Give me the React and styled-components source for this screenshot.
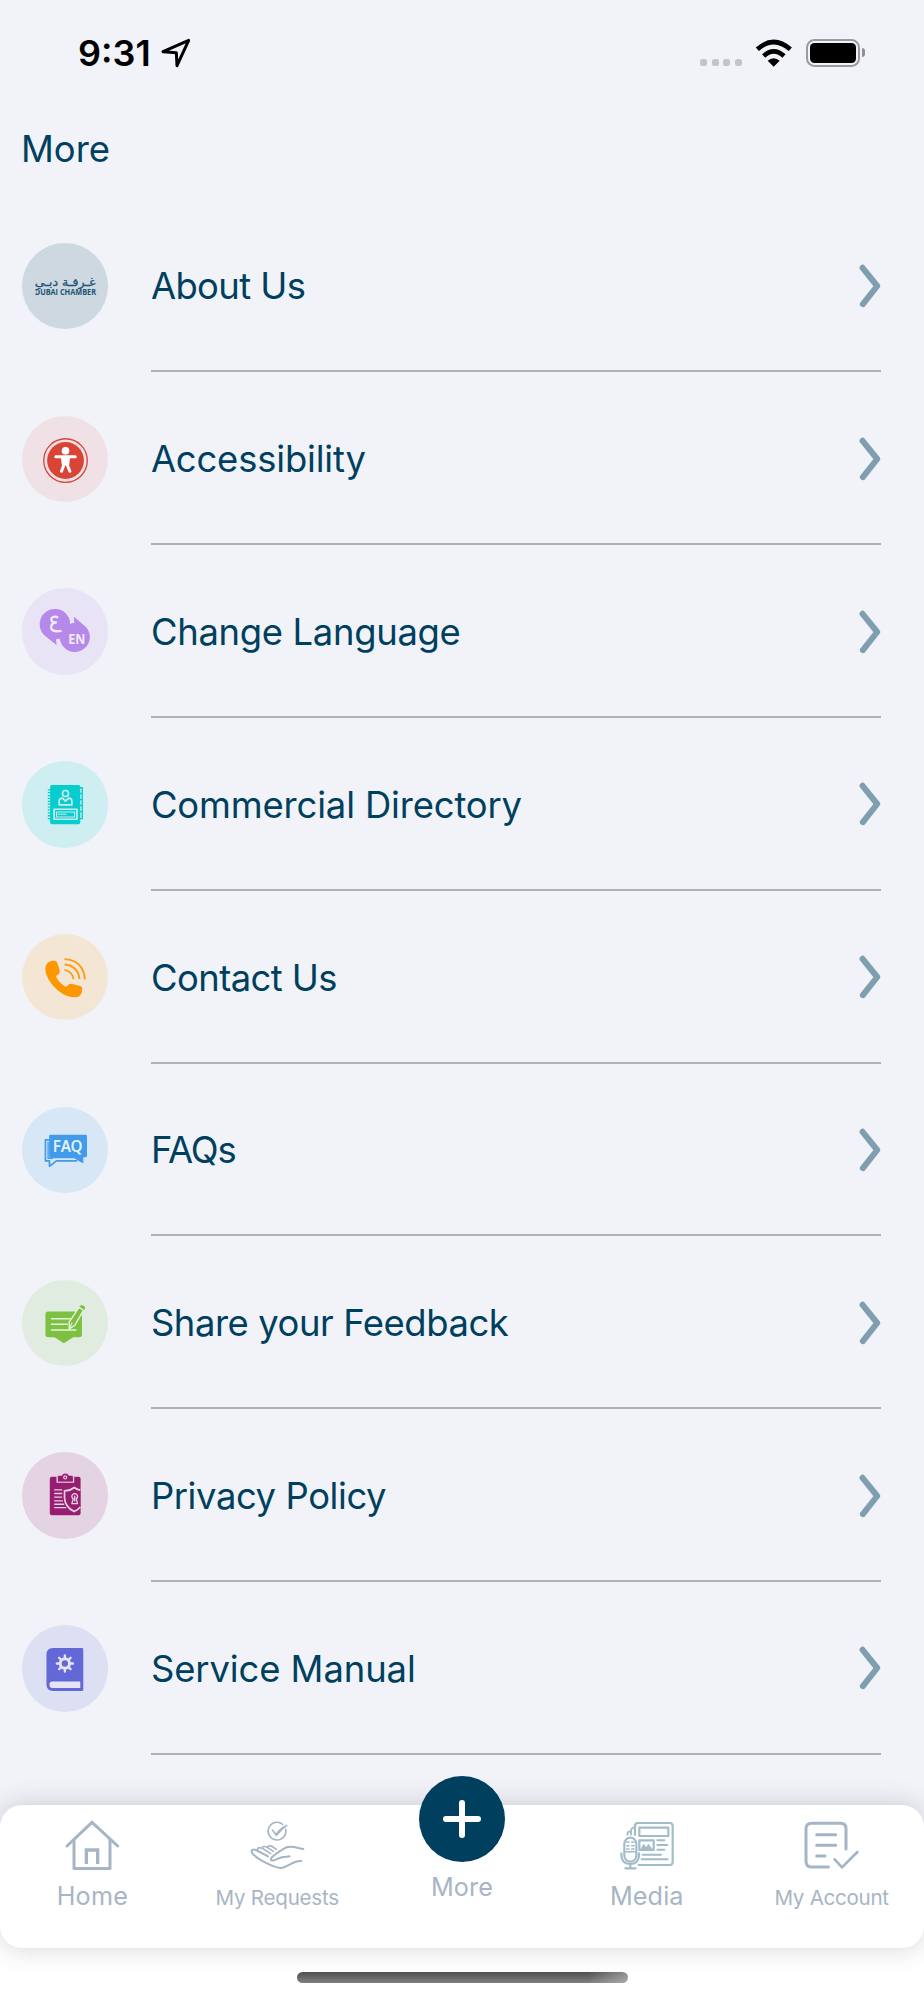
import React from 'react';
import styled, { createGlobalStyle } from 'styled-components';

const items = [
    {name: "About Us", icon: AboutIcon, color: "#ced8e1", track: -0.6},
    {name: "Accessibility", icon: AccessIcon, color: "#f0e1e6", track: -0.16},
    {name: "Change Language", icon: LanguageIcon, color: "#e8e3f5", track: -0.3},
    {name: "Commercial Directory", icon: DirectoryIcon, color: "#ceeef1", track: -0.14},
    {name: "Contact Us", icon: PhoneIcon, color: "#f3e6d5", track: -0.55},
    {name: "FAQs", icon: FaqIcon, color: "#d7e7f6", track: -1.1},
    {name: "Share your Feedback", icon: FeedbackIcon, color: "#e0ecdf", track: -0.42},
    {name: "Privacy Policy", icon: PrivacyIcon, color: "#e4d4e3", track: -0.4},
    {name: "Service Manual", icon: ManualIcon, color: "#dddff2", track: -0.08},
];

export default function App() {
  return (
    <Screen>
        <GlobalStyle />
        <StatusBar>
            <Clock>9:31</Clock>
            <LocationIcon />
            <StatusRight>
                <Dots><i /><i /><i /><i /></Dots>
                <WifiIcon />
                <Battery><div /></Battery>
                <BatteryTip />
            </StatusRight>
        </StatusBar>
        <Title>More</Title>
        <List>
            {items.map(({name, icon: Icon, color, track}) => (
                <Row key={name}>
                    <Badge $color={color}><Icon /></Badge>
                    <RowBody>
                        <Label $track={track}>{name}</Label>
                        <Chevron />
                    </RowBody>
                </Row>
            ))}
        </List>
        <Footer>
            <TabBar>
                <Tab><HomeIcon /><TabLabel $track={0.2}>Home</TabLabel></Tab>
                <Tab><RequestsIcon /><TabLabel $small $track={-0.25}>My Requests</TabLabel></Tab>
                <Tab>
                    <MoreButton><PlusIcon /></MoreButton>
                    <TabLabel $track={0.1} $raised>More</TabLabel>
                </Tab>
                <Tab><MediaIcon /><TabLabel $track={0.1}>Media</TabLabel></Tab>
                <Tab><AccountIcon /><TabLabel $small $track={-0.3}>My Account</TabLabel></Tab>
            </TabBar>
            <HomeIndicator />
        </Footer>
    </Screen>
  )
}

function LocationIcon() {
    return (
        <svg width="30" height="30" viewBox="482 114 90 90" fill="none" stroke="#000" strokeWidth="9" strokeLinejoin="round">
            <path d="M565 121 L488 155 L528 158 L530 197 Z" />
        </svg>
    );
}

function WifiIcon() {
    return (
        <svg width="38" height="30" viewBox="285 112 114 90" fill="none" stroke="#000" strokeWidth="14">
            <path d="M292 146 Q341 102 391 146" />
            <path d="M311 166 Q341 138 372 166" />
            <path d="M323 180 Q341 165 359 180 L341 198 Z" fill="#000" stroke="none" />
        </svg>
    );
}

function Chevron() {
    return (
        <svg width="24" height="46" viewBox="0 0 24 46" fill="none" stroke="#7f9fb1" strokeWidth="6" strokeLinecap="round" strokeLinejoin="round">
            <path d="M5.6 4.8 L20.2 23 L5.9 41.2" />
        </svg>
    );
}

function AboutIcon() {
    return (
        <svg viewBox="66 38 258 258" fill="#1d5373">
            <text x="104" y="166" fontSize="34" fontFamily="DejaVu Sans, sans-serif" textLength="182" lengthAdjust="spacingAndGlyphs" stroke="#1d5373" strokeWidth="0.8">غـرفـة دبـي</text>
            <text x="104" y="193" fontSize="23.5" fontFamily="Open Sans, sans-serif" fontWeight="700" textLength="183" lengthAdjust="spacingAndGlyphs">DUBAI CHAMBER</text>
            <rect x="103" y="180" width="6" height="9" fill="#ced8e1" />
        </svg>
    );
}

function AccessIcon() {
    return (
        <svg viewBox="66 555 258 258">
            <circle cx="196" cy="688" r="65" fill="none" stroke="#d94436" strokeWidth="4" />
            <circle cx="196" cy="688" r="55" fill="#d94436" />
            <circle cx="196" cy="659" r="11.5" fill="#fff" />
            <path d="M167 677 H225 M184 720 L193 696 H199 L209 720" fill="none" stroke="#fff" strokeWidth="9" strokeLinecap="round" strokeLinejoin="round" />
            <path d="M182 676 H210 L207 702 H185 Z" fill="#fff" />
        </svg>
    );
}

function LanguageIcon() {
    return (
        <svg viewBox="66 54 258 258">
            <path d="M165 117 A45 45 0 0 1 210 160 L222 155 L221 140 L258 171 A45 45 0 1 1 180 211 L177 206 L168 209 L169 224 L133 195 A45 45 0 0 1 165 117 Z" fill="#b588ea" />
            <path d="M209 158 L222 155 M178 207 L168 210" stroke="#e8e3f5" strokeWidth="5" />
            <path d="M174 143 C163 136 151 141 154 151 C156 156 161 157 170 157 C158 157 151 164 153 173 C156 185 172 184 184 182" fill="none" stroke="#f1eafa" strokeWidth="7" />
            <text x="204" y="221" fontSize="43" fontWeight="700" fontFamily="Noto Sans, sans-serif" textLength="51" lengthAdjust="spacingAndGlyphs" fill="#f1eafa">EN</text>
        </svg>
    );
}

function DirectoryIcon() {
    return (
        <svg viewBox="66 573 258 258" fill="none">
            <rect x="150" y="645" width="90" height="117" rx="5" fill="#08cdce" />
            <path d="M147 657 V752" stroke="#08cdce" strokeWidth="8" strokeDasharray="4 4.6" />
            <path d="M239 653 H246 V745 H239" stroke="#08cdce" strokeWidth="4" />
            <path d="M243 668 V740" stroke="#08cdce" strokeWidth="8" strokeDasharray="4 14" />
            <g stroke="#ceeef1" strokeWidth="5" strokeLinejoin="round">
                <circle cx="196" cy="670" r="9" />
                <path d="M177 704 V694 Q177 684 187 684 L196 693 L205 684 Q215 684 215 694 V704 Z" />
                <rect x="162" y="717" width="68" height="30" />
                <path d="M169 725 H223 V740 H169 Z M172 732 H199" strokeWidth="3" />
            </g>
        </svg>
    );
}

function PhoneIcon() {
    return (
        <svg viewBox="66 57 258 258" fill="none">
            <path d="M147 140 Q157 135 166 138 Q171 140 173 147 L179 169 Q180 175 173 178 Q168 181 168 185 Q177 204 195 214 Q200 215 204 209 Q209 204 216 206 L240 212 Q246 214 246 221 Q245 240 232 245 Q213 249 188 236 Q150 212 137 174 Q132 148 147 140 Z" fill="#fc9700" />
            <path d="M193 132 Q249 135 254 193 M193 148 Q233 151 238 192 M193 164 Q216 168 220 192" stroke="#fc9d14" strokeWidth="5.5" />
        </svg>
    );
}

function FaqIcon() {
    return (
        <svg viewBox="66 574 258 258" fill="none">
            <path d="M147 672 H136 V735 H148 V751 L169 735 H231" stroke="#409bea" strokeWidth="5" strokeLinejoin="round" />
            <path d="M144 678 V727 H158" stroke="#409bea" strokeWidth="4" />
            <path d="M151 657 H256 Q260 657 260 661 V720 Q260 724 256 724 H249 V743 L222 727 H156 Q147 727 147 719 V661 Q147 657 151 657 Z" fill="#409bea" />
            <text x="158" y="707" fontSize="46" fontWeight="600" fontFamily="Noto Sans, sans-serif" fill="#e4f0fb" textLength="89" lengthAdjust="spacingAndGlyphs">FAQ</text>
        </svg>
    );
}

function FeedbackIcon() {
    return (
        <svg viewBox="66 57 258 258" fill="none">
            <path d="M144 151 H237 Q245 151 245 159 V220 Q245 228 237 228 H219 L191 246 L163 228 H144 Q136 228 136 220 V159 Q136 151 144 151 Z" fill="#7cc142" />
            <path d="M154 173 H210 M154 189 H201 M154 206 H227" stroke="#e7f4dc" strokeWidth="4.5" strokeLinecap="round" />
            <path d="M236 139 L250 147 L224 192 L207 203 L207 183 Z" fill="#7cc142" stroke="#e7f4dc" strokeWidth="4" strokeLinejoin="round" />
            <path d="M237 136 Q243 129 252 135 Q257 140 252 147 Z" fill="#7cc142" />
            <path d="M208 201 L216 184" stroke="#e7f4dc" strokeWidth="3" />
        </svg>
    );
}

function PrivacyIcon() {
    return (
        <svg viewBox="66 575 258 258" fill="none">
            <rect x="149" y="649" width="92" height="115" rx="6" fill="#971d70" />
            <path d="M171 648 V665 H220 V648" stroke="#e4d4e3" strokeWidth="4" />
            <path d="M174 646 H185 Q188 639 195 639 Q203 639 206 646 H217 V662 H174 Z" fill="#971d70" />
            <circle cx="195" cy="651" r="4.5" stroke="#e4d4e3" strokeWidth="3.5" />
            <path d="M162 688 H186 M162 699 H186 M162 710 H186 M162 721 H188 M162 731 H192 M162 741 H198" stroke="#e4d4e3" strokeWidth="4" />
            <path d="M240 689 Q229 687 222 681 Q209 691 193 691 V712 Q194 739 222 753 Q234 747 240 739" fill="#971d70" stroke="#e4d4e3" strokeWidth="5" />
            <path d="M219 715 A8.5 8.5 0 1 1 228 715 L232 729 H215 Z" stroke="#e4d4e3" strokeWidth="4" strokeLinejoin="round" />
            <path d="M223.5 706 V723" stroke="#e4d4e3" strokeWidth="4" />
        </svg>
    );
}

function ManualIcon() {
    return (
        <svg viewBox="66 75 258 258" fill="none">
            <path d="M158 144 H245 Q249 144 249 148 V268 Q249 272 245 272 H159 Q139 272 139 253 V164 Q139 144 158 144 Z" fill="#6468d6" />
            <path d="M240 244 V263 H157 Q148 263 148 253.5 Q148 244 157 244 Z" fill="#e4e5f6" />
            <circle cx="194" cy="190" r="14" stroke="#e4e5f6" strokeWidth="9" />
            <path d="M194 173 V166 M194 207 V214 M177 190 H170 M211 190 H218 M182 178 L177 173 M206 202 L211 207 M206 178 L211 173 M182 202 L177 207" stroke="#e4e5f6" strokeWidth="7" strokeLinecap="round" />
        </svg>
    );
}

function HomeIcon() {
    return (
        <TabSvg viewBox="193 180 168 156" strokeWidth="9">
            <path d="M202 258 L277 187 L354 258" strokeLinecap="round" />
            <path d="M223 238 V325.5 H331 V238" strokeLinejoin="round" />
            <path d="M260 312 V270 H294 V312" strokeWidth="10" />
        </TabSvg>
    );
}

function RequestsIcon() {
    return (
        <TabSvg viewBox="747 180 168 156" strokeWidth="6" strokeLinecap="round" strokeLinejoin="round">
            <path d="M848 193 A26.5 26.5 0 1 0 857 208" strokeWidth="5" />
            <path d="M817 210 L828 223 Q841 204 861 196 Q843 209 829 227 Z" strokeWidth="4" />
            <path d="M910 267 C885 264 875 254 855 264 C838 274 822 283 813 295 C811 301 815 303 822 301 C833 299 838 292 850 291 Q862 291 869 289" />
            <path d="M904 303 C881 301 872 316 848 323 Q838 326 816 317 C793 307 770 296 757 280 C751 269 758 266 768 270 L804 289" />
            <path d="M773 270 C771 262 780 262 789 266 L812 281 M787 265 C786 258 795 258 803 263 L820 274 M803 262 C804 256 813 257 819 261 L829 268" strokeWidth="5" />
        </TabSvg>
    );
}

function MediaIcon() {
    return (
        <TabSvg viewBox="470 180 168 156" strokeWidth="6.5" strokeLinecap="round" strokeLinejoin="round" $teal>
            <path d="M518 225 V198 Q518 189 527 189 H622 Q631 189 631 198 V306 Q631 315 622 315 H529" />
            <path d="M495 224 Q495 214 504 214 M506 224 V213 Q506 203 517 203" strokeWidth="5.5" />
            <rect x="531" y="203" width="87" height="25" />
            <rect x="531" y="241" width="43" height="29" />
            <path d="M535 267 L544 252 L552 262 L558 252 L570 267 Z" className="solid" strokeWidth="1" />
            <path d="M585 241 H606 M585 255 H615 M585 269 H606 M541 284 H596 M538 298 H616" strokeWidth="6" />
            <rect x="486" y="233" width="36" height="72" rx="18" />
            <path d="M488 275 H520 M493 246 H500 M493 257 H500 M508 246 H515 M508 257 H515 M493 267 H500 M508 267 H515" strokeWidth="4.5" />
            <path d="M477 280 Q476 312 504 312 Q531 312 530 280 M504 313 V325 M489 325 H520" />
        </TabSvg>
    );
}

function AccountIcon() {
    return (
        <TabSvg viewBox="1025 180 168 156" strokeWidth="9" strokeLinecap="round" strokeLinejoin="round">
            <path d="M1098 321 H1048 Q1031 321 1031 304 V207 Q1031 190 1048 190 H1134 Q1151 190 1151 207 V267" />
            <path d="M1063 224 H1120 M1063 256 H1120 M1063 288 H1088" />
            <path d="M1117 298 L1139 322 L1185 276" strokeWidth="8" />
        </TabSvg>
    );
}

function PlusIcon() {
    return (
        <svg width="40" height="40" viewBox="0 0 40 40" stroke="#fff" strokeWidth="6" strokeLinecap="round">
            <path d="M20 4 V36 M4 20 H36" />
        </svg>
    );
}


const GlobalStyle = createGlobalStyle`
    body {
        margin: 0;
        background: #f1f3f9;
        font-family: Inter, "Liberation Sans", sans-serif;
    }
    * {
        box-sizing: border-box;
    }
    svg {
        display: block;
        flex: none;
    }
`;

const Screen = styled.div`
    width: 924px;
    height: 2000px;
    display: flex;
    flex-direction: column;
    overflow: hidden;
    background: #f1f3f9;
`;

const StatusBar = styled.header`
    display: flex;
    align-items: center;
    height: 105px;
    padding: 0 59px 0 78px;
`;

const Clock = styled.div`
    width: 83px;
    font-size: 36px;
    font-weight: 600;
    color: #000;
`;

const StatusRight = styled.div`
    display: flex;
    align-items: center;
    margin-left: auto;
`;

const Dots = styled.div`
    display: flex;
    gap: 4.6px;
    margin: 19px 13px 0 0;
    i {
        width: 7px;
        height: 7px;
        border-radius: 2.5px;
        background: #c4c3c9;
    }
`;

const Battery = styled.div`
    width: 54px;
    height: 28px;
    margin-left: 13px;
    padding: 2px;
    border: 2px solid #9a9b9f;
    border-radius: 8.5px;
    div {
        height: 100%;
        border-radius: 4.5px;
        background: #000;
    }
`;

const BatteryTip = styled.div`
    width: 3px;
    height: 9px;
    margin-left: 2px;
    border-radius: 0 4px 4px 0;
    background: #8f9094;
`;

const Title = styled.h1`
    margin: 0;
    padding-left: 21px;
    height: 94.6px;
    font-size: 36.4px;
    line-height: 88px;
    font-weight: 420;
    color: #003f5e;
`;

const List = styled.div`
    display: flex;
    flex-direction: column;
`;

const Row = styled.div`
    display: flex;
    align-items: center;
    height: 172.8px;
    padding: 0 43px 0 21.8px;
`;

const Badge = styled.div`
    width: 86.4px;
    height: 86.4px;
    border-radius: 50%;
    background: ${({$color}) => $color};
`;

const RowBody = styled.div`
    display: flex;
    flex: 1;
    align-items: center;
    justify-content: space-between;
    height: 100%;
    margin-left: 43px;
    padding-top: 2px;
    border-bottom: 2px solid #b0b1b5;
`;

const Label = styled.div`
    margin-left: -0.3px;
    padding-top: 1px;
    font-size: 36.4px;
    font-weight: 420;
    letter-spacing: ${({$track}) => $track}px;
    white-space: nowrap;
    color: #003f5e;
`;

const Footer = styled.footer`
    flex: 1;
    display: flex;
    flex-direction: column;
    align-items: center;
    margin-top: 50.2px;
    background: linear-gradient(#f1f3f9 50%, #fff 50%);
`;

const TabBar = styled.nav`
    display: grid;
    grid-template-columns: repeat(5, 1fr);
    width: 100%;
    height: 143px;
    border-radius: 22px;
    background: #fff;
    box-shadow: 0 0 28px rgba(0, 0, 0, 0.17);
`;

const Tab = styled.div`
    display: flex;
    flex-direction: column;
    align-items: center;
    padding-top: 15px;
`;

const TabSvg = styled.svg`
    width: 56px;
    height: 52px;
    fill: none;
    stroke: ${({$teal}) => $teal ? "#a3bcc9" : "#a5b5c5"};
    .solid {
        fill: #a3bcc9;
    }
`;

const TabLabel = styled.div`
    height: 36px;
    margin-top: ${({$raised, $small}) => $raised ? "7px" : $small ? "8px" : "6px"};
    font-size: ${({$small}) => $small ? "20.6px" : "25.2px"};
    font-weight: 400;
    line-height: 36px;
    letter-spacing: ${({$track}) => $track}px;
    white-space: nowrap;
    color: #a8b5c4;
`;

const MoreButton = styled.div`
    display: flex;
    align-items: center;
    justify-content: center;
    width: 86px;
    height: 86px;
    margin-top: -44px;
    border-radius: 50%;
    background: #003f5e;
`;

const HomeIndicator = styled.div`
    width: 331px;
    height: 11px;
    margin-top: 24px;
    border-radius: 6px;
    background:
        linear-gradient(90deg, transparent 88%, rgba(255, 255, 255, 0.35)),
        linear-gradient(#505050, #808080);
`;
